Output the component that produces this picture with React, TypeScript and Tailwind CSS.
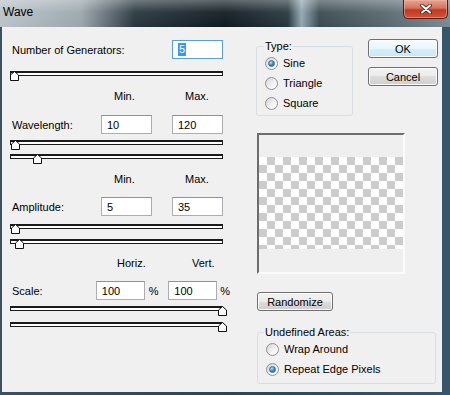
import React from "react";

function Thumb({ left }: { left: number }) {
  return (
    <svg className="absolute top-0" style={{ left }} width="9" height="10" viewBox="0 0 9 10">
      <path d="M0.5 9.5V4L4.5 0.5L8.5 4V9.5Z" fill="#ffffff" stroke="#111111" />
    </svg>
  );
}

function Slider({ thumb, className }: { thumb: number; className: string }) {
  return (
    <div className={`relative w-[213px] h-[10px] ${className}`}>
      <div className="h-[5px] border border-t-2 border-[#1b1b1b] bg-white" />
      <Thumb left={thumb} />
    </div>
  );
}

function Radio({ checked }: { checked?: boolean }) {
  return (
    <span className="w-[13px] h-[13px] rounded-full border border-[#8e8f8f] bg-[linear-gradient(135deg,#d4d4d4,#f4f4f4_60%,#ffffff)] flex items-center justify-center shrink-0">
      {checked && (
        <span className="w-[7px] h-[7px] rounded-full bg-[radial-gradient(circle_at_35%_30%,#b9e3fa,#2a7fc0_60%,#135a92)] border border-[#3b6e95]" />
      )}
    </span>
  );
}

function TextBox({ value, className }: { value: string; className: string }) {
  return (
    <div className={`h-[19px] bg-white border border-[#abadb3] border-t-[#8e9297] flex items-center pl-[5px] ${className}`}>
      {value}
    </div>
  );
}

const btn =
  "h-[19px] w-[70px] rounded-[3px] border border-[#707070] bg-[linear-gradient(#f2f2f2,#ebebeb_50%,#dddddd_50%,#cfcfcf)] flex items-center justify-center shadow-[inset_0_0_0_1px_#fcfcfc]";

export default function App() {
  return (
    <div className="w-[450px] h-[395px] bg-[linear-gradient(90deg,#3b5060,#2c4556_50%,#37566b)] font-['Liberation_Sans',Arial,sans-serif] text-[11px] leading-[14px] text-black overflow-hidden">
      {/* Title bar */}
      <div className="h-[27px] flex relative bg-[linear-gradient(90deg,#b9c3c8,#9aa6ac_18%,#27363e_30%,#0f1b21_50%,#27373f_64%,#90a6b0_67%,#3a4a52_71%,#56666e_85%,#7a8a92)]">
        <div className="absolute inset-0 bg-[linear-gradient(#ffffff55,#ffffff10_45%,#00000000)]" />
        <span className="relative ml-[3px] mt-[5px] text-[12px] leading-[14px] text-black">Wave</span>
        <div className="relative ml-auto mr-[2px] w-[45px] h-[19px] rounded-b-[5px] border border-t-0 border-[#5a1b12] bg-[linear-gradient(#e8a592,#d4725c_45%,#c2381f_55%,#d0533a)] flex items-center justify-center shadow-[inset_0_0_0_1px_#f2b9aa80]">
          <svg width="12" height="10" viewBox="0 0 12 10">
            <path d="M2 1.5L10 8.5M10 1.5L2 8.5" stroke="#3d0d06" strokeWidth="3.6" strokeLinecap="round" />
            <path d="M2 1.5L10 8.5M10 1.5L2 8.5" stroke="#ffffff" strokeWidth="2.2" strokeLinecap="round" />
          </svg>
        </div>
      </div>

      {/* Body */}
      <div className="ml-[2px] w-[440px] h-[365px] bg-[#f0f0f0] flex">
        {/* Left column */}
        <div className="ml-[8px] w-[220px] flex flex-col">
          <div className="mt-[13px] h-[19px] w-[213px] flex items-center">
            <span className="pl-[2px] flex-1">Number of Generators:</span>
            <div className="h-[19px] w-[51px] bg-white border border-[#569de5] flex items-center pl-[5px]">
              <span className="bg-[#3399ff] text-white px-[1px] leading-[13px]">5</span>
            </div>
          </div>
          <Slider thumb={0} className="mt-[12px]" />

          <div className="mt-[8px] h-[14px] flex">
            <span className="ml-[104px] w-[30px]">Min.</span>
            <span className="ml-[41px]">Max.</span>
          </div>
          <div className="mt-[12px] h-[19px] flex items-center">
            <span className="pl-[2px] w-[91px]">Wavelength:</span>
            <TextBox value="10" className="w-[51px]" />
            <TextBox value="120" className="w-[51px] ml-[20px]" />
          </div>
          <Slider thumb={1} className="mt-[6px]" />
          <Slider thumb={23} className="mt-[4px]" />

          <div className="mt-[8px] h-[14px] flex">
            <span className="ml-[104px] w-[30px]">Min.</span>
            <span className="ml-[41px]">Max.</span>
          </div>
          <div className="mt-[11px] h-[19px] flex items-center">
            <span className="pl-[2px] w-[91px]">Amplitude:</span>
            <TextBox value="5" className="w-[51px]" />
            <TextBox value="35" className="w-[51px] ml-[20px]" />
          </div>
          <Slider thumb={1} className="mt-[8px]" />
          <Slider thumb={5} className="mt-[5px]" />

          <div className="mt-[7px] h-[14px] flex">
            <span className="ml-[107px] w-[32px]">Horiz.</span>
            <span className="ml-[43px]">Vert.</span>
          </div>
          <div className="mt-[11px] h-[19px] flex items-center">
            <span className="pl-[2px] w-[88px]">Scale:</span>
            <TextBox value="100" className="w-[50px]" />
            <span className="w-[24px] pl-[4px]">%</span>
            <TextBox value="100" className="w-[50px]" />
            <span className="pl-[3px]">%</span>
          </div>
          <Slider thumb={208} className="mt-[6px]" />
          <Slider thumb={208} className="mt-[6px]" />
        </div>

        {/* Right column */}
        <div className="ml-[26px] w-[182px] flex flex-col pt-[12px]">
          <div className="flex">
            <fieldset className="w-[97px] h-[77px] border border-[#d5dfe5] rounded-[3px] pl-[8px]">
              <legend className="-ml-[1px] px-[1px] leading-[14px]">Type:</legend>
              <div className="h-[20px] flex items-center gap-[5px]">
                <Radio checked />
                <span>Sine</span>
              </div>
              <div className="h-[20px] flex items-center gap-[5px]">
                <Radio />
                <span>Triangle</span>
              </div>
              <div className="h-[20px] flex items-center gap-[5px]">
                <Radio />
                <span>Square</span>
              </div>
            </fieldset>
            <div className="ml-[15px] flex flex-col">
              <div className={`${btn} border-[#3c7fb1] bg-[linear-gradient(#f6fcff,#e8f6fd_50%,#d6eefb_50%,#c9e7f8)] shadow-[inset_0_0_0_1px_#c6e9fb]`}>OK</div>
              <div className={`${btn} mt-[9px]`}>Cancel</div>
            </div>
          </div>

          <div className="mt-[17px] ml-[1px] w-[148px] h-[141px] border-2 border-t-[#6d6d6d] border-l-[#6d6d6d] border-r-[#fbfbfb] border-b-[#fbfbfb] bg-[#efefef]">
            <div className="mt-[22px] h-[92px] bg-[image:repeating-conic-gradient(#cccccc_0%_25%,#ffffff_0%_50%)] bg-[length:16px_16px]" />
          </div>

          <div className={`${btn} mt-[18px] ml-[1px] w-[76px] h-[17px]`}>Randomize</div>

          <fieldset className="mt-[14px] ml-[1px] w-[179px] h-[59px] border border-[#d5dfe5] rounded-[3px] pl-[8px]">
            <legend className="-ml-[2px] px-[1px] leading-[14px]">Undefined Areas:</legend>
            <div className="h-[20px] flex items-center gap-[5px]">
              <Radio />
              <span>Wrap Around</span>
            </div>
            <div className="h-[20px] flex items-center gap-[5px]">
              <Radio checked />
              <span>Repeat Edge Pixels</span>
            </div>
          </fieldset>
        </div>
      </div>
    </div>
  );
}
